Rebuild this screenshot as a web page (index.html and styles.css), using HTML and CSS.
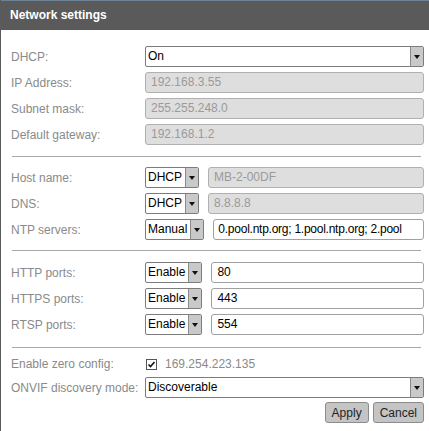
FILE: index.html
```html
<!DOCTYPE html>
<html>
<head>
<meta charset="utf-8">
<link rel="stylesheet" href="styles.css">
</head>
<body>
<div class="dialog">
  <div class="titlebar">Network settings</div>
  <div class="content">
    <div class="section">
      <div class="row"><span class="label">DHCP:</span><div class="select grow"><span class="val">On</span><span class="arrow"></span></div></div>
      <div class="row"><span class="label">IP Address:</span><div class="input grow disabled">192.168.3.55</div></div>
      <div class="row"><span class="label">Subnet mask:</span><div class="input grow disabled">255.255.248.0</div></div>
      <div class="row"><span class="label">Default gateway:</span><div class="input grow disabled">192.168.1.2</div></div>
    </div>
    <div class="sep s1"></div>
    <div class="section">
      <div class="row"><span class="label">Host name:</span><div class="select"><span class="val">DHCP</span><span class="arrow"></span></div><div class="input grow disabled">MB-2-00DF</div></div>
      <div class="row"><span class="label">DNS:</span><div class="select"><span class="val">DHCP</span><span class="arrow"></span></div><div class="input grow disabled">8.8.8.8</div></div>
      <div class="row"><span class="label">NTP servers:</span><div class="select"><span class="val">Manual</span><span class="arrow"></span></div><div class="input grow tight">0.pool.ntp.org; 1.pool.ntp.org; 2.pool</div></div>
    </div>
    <div class="sep s2"></div>
    <div class="section">
      <div class="row"><span class="label">HTTP ports:</span><div class="select"><span class="val">Enable</span><span class="arrow"></span></div><div class="input grow">80</div></div>
      <div class="row"><span class="label">HTTPS ports:</span><div class="select"><span class="val">Enable</span><span class="arrow"></span></div><div class="input grow">443</div></div>
      <div class="row"><span class="label">RTSP ports:</span><div class="select"><span class="val">Enable</span><span class="arrow"></span></div><div class="input grow">554</div></div>
    </div>
    <div class="sep s3"></div>
    <div class="section">
      <div class="row short"><span class="label">Enable zero config:</span><span class="check"><svg width="11" height="11" viewBox="0 0 11 11"><rect x="0.5" y="0.5" width="10" height="10" fill="#fff" stroke="#555"/><path d="M2.5 5.5 L4.5 7.5 L8.5 3" fill="none" stroke="#111" stroke-width="1.6"/></svg></span><span class="ip">169.254.223.135</span></div>
      <div class="row"><span class="label">ONVIF discovery mode:</span><div class="select grow"><span class="val">Discoverable</span><span class="arrow"></span></div></div>
    </div>
    <div class="buttons"><button class="btn">Apply</button><button class="btn">Cancel</button></div>
  </div>
</div>
</body>
</html>
```
FILE: styles.css
```css
html, body { margin: 0; padding: 0; background: #fff; }
body { font-family: "Liberation Sans", Arial, sans-serif; font-size: 12px; color: #000; }
.dialog { width: 428px; height: 431px; border-left: 1px solid #5a5a5a; background: #fff; }
.titlebar { height: 29px; border-top: 1px solid #6f8396; background: #5a5a5a; color: #fff; font-weight: bold; font-size: 12px; line-height: 28px; padding-left: 9px; }
.content { padding: 16px 5px 0 10px; }
.section { display: flex; flex-direction: column; gap: 5px; }
.row { display: flex; align-items: center; height: 21px; }
.row.short { height: 16px; }
.label { color: #8a8a8a; min-width: 129px; margin-right: 5px; white-space: nowrap; }
.grow { flex: 1; min-width: 0; }
.select { display: flex; height: 19px; border: 1px solid #7c7c7c; border-radius: 2px; background: #fff; margin-right: 9px; overflow: hidden; }
.select.grow { margin-right: 0; }
.select .val { flex: 1; padding: 0 3px 0 2px; line-height: 19px; white-space: nowrap; }
.arrow { width: 12px; background: #c9c9c9; border-left: 1px solid #8a8a8a; display: flex; align-items: center; justify-content: center; }
.arrow::after { content: ""; border-left: 3.5px solid transparent; border-right: 3.5px solid transparent; border-top: 4px solid #111; }
.input { height: 19px; line-height: 19px; border: 1px solid #a0a0a0; border-radius: 3px; background: #fff; padding: 0 5px; white-space: nowrap; overflow: hidden; }
.input.tight { letter-spacing: -0.25px; padding-left: 4px; }
.input.disabled { background: #dedede; color: #9a9a9a; border-color: #b0b0b0; }
.sep { height: 1px; background: #a8a8a8; margin-right: 3px; }
.s1 { margin: 11px 3px 10px 1px; }
.s2 { margin: 10px 3px 11px 1px; }
.s3 { margin: 12px 3px 8px 1px; }
.check { display: flex; width: 11px; height: 11px; margin-left: 1px; }
.ip { color: #8a8a8a; margin-left: 8px; }
.buttons { display: flex; justify-content: flex-end; gap: 4px; margin-top: 4px; }
.btn { font-family: "Liberation Sans", Arial, sans-serif; font-size: 12px; color: #222; height: 21px; padding: 0 6px; background: #c4c4c4; border: 1px solid #8c8c8c; border-radius: 3px; }
```
